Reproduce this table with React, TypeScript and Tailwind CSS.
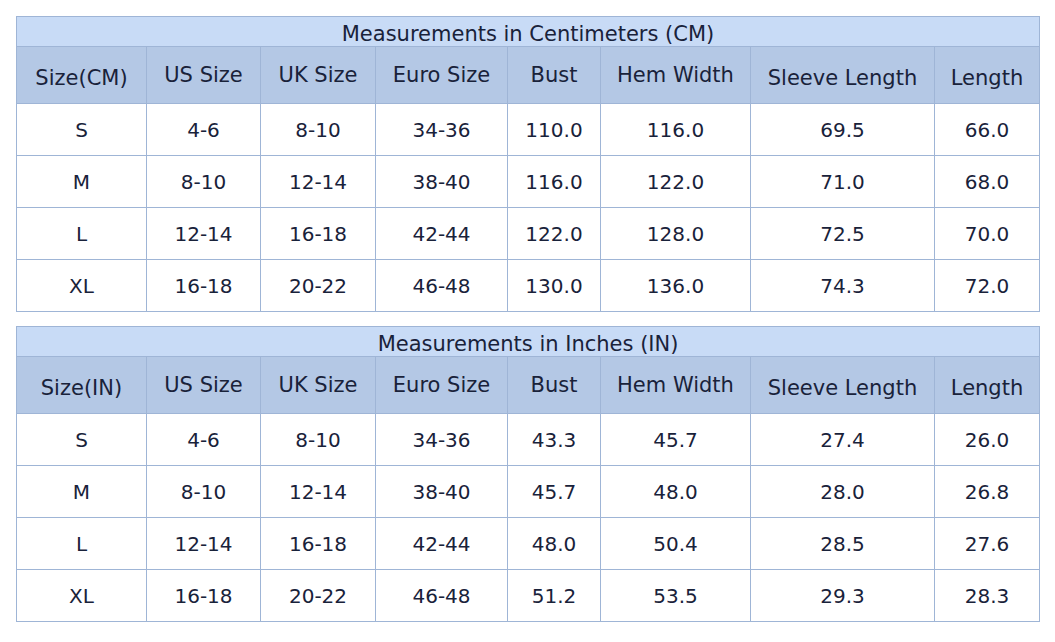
const headers = ['US Size', 'UK Size', 'Euro Size', 'Bust', 'Hem Width', 'Sleeve Length', 'Length'];
const lowered = [false, false, false, false, false, true, true];
const widths = ['w-[130px]', 'w-[114px]', 'w-[115px]', 'w-[132px]', 'w-[93px]', 'w-[150px]', 'w-[184px]', 'w-[105px]'];

const cm = [
  ['S', '4-6', '8-10', '34-36', '110.0', '116.0', '69.5', '66.0'],
  ['M', '8-10', '12-14', '38-40', '116.0', '122.0', '71.0', '68.0'],
  ['L', '12-14', '16-18', '42-44', '122.0', '128.0', '72.5', '70.0'],
  ['XL', '16-18', '20-22', '46-48', '130.0', '136.0', '74.3', '72.0'],
];

const inches = [
  ['S', '4-6', '8-10', '34-36', '43.3', '45.7', '27.4', '26.0'],
  ['M', '8-10', '12-14', '38-40', '45.7', '48.0', '28.0', '26.8'],
  ['L', '12-14', '16-18', '42-44', '48.0', '50.4', '28.5', '27.6'],
  ['XL', '16-18', '20-22', '46-48', '51.2', '53.5', '29.3', '28.3'],
];

function SizeTable({ title, unit, rows }: { title: string; unit: string; rows: string[][] }) {
  return (
    <table className="table-fixed w-[1024px] border-collapse text-[#19223a]">
      <colgroup>
        {widths.map((w, i) => (
          <col key={i} className={w} />
        ))}
      </colgroup>
      <thead>
        <tr className="h-[30px] bg-[#c8dbf6]">
          <th colSpan={8} className="border border-[#9fb5d6] p-0 pt-[5px] text-[21px] font-normal leading-none">
            {title}
          </th>
        </tr>
        <tr className="h-[57px] bg-[#b4c8e5]">
          <th className="border border-[#9fb5d6] p-0 pt-[7px] text-[21px] font-normal">Size({unit})</th>
          {headers.map((h, i) => (
            <th
              key={h}
              className={
                'border border-[#9fb5d6] p-0 text-[21px] font-normal ' + (lowered[i] ? 'pt-[7px]' : 'pt-[1px]')
              }
            >
              {h}
            </th>
          ))}
        </tr>
      </thead>
      <tbody>
        {rows.map((r) => (
          <tr key={r[0]} className="h-[52px] bg-white">
            {r.map((c, j) => (
              <td key={j} className="border border-[#9fb5d6] p-0 text-center text-[20px]">
                {c}
              </td>
            ))}
          </tr>
        ))}
      </tbody>
    </table>
  );
}

export default function App() {
  return (
    <div className="w-[1055px] h-[642px] bg-white pl-4 pt-4 flex flex-col gap-[14px] font-['DejaVu_Sans',sans-serif]">
      <SizeTable title="Measurements in Centimeters (CM)" unit="CM" rows={cm} />
      <SizeTable title="Measurements in Inches (IN)" unit="IN" rows={inches} />
    </div>
  );
}
